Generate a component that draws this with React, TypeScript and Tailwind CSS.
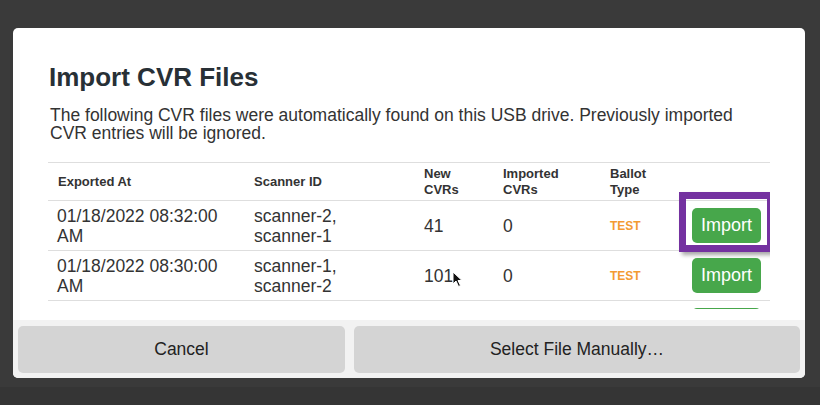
import React from "react";

const rows = [
  { at: ["01/18/2022 08:32:00", "AM"], ids: ["scanner-2,", "scanner-1"], n: "41", imp: "0", test: true, hl: true, label: "Import" },
  { at: ["01/18/2022 08:30:00", "AM"], ids: ["scanner-1,", "scanner-2"], n: "101", imp: "0", test: true, hl: false, label: "Import" },
  { at: ["", ""], ids: ["", ""], n: "", imp: "", test: false, hl: false, label: "" },
];

export default function App() {
  return (
    <div
      className="relative w-[820px] h-[405px] bg-[#3a3a3a] overflow-hidden pt-[28px] pl-[13px]"
      style={{ fontFamily: '"Liberation Sans", Arial, sans-serif' }}
    >
      <div className="w-[792px] h-[350px] bg-white rounded-[5px] overflow-hidden flex flex-col">
        <div className="h-[292px] flex flex-col pt-[34px] px-[35px]">
          <h1 className="text-[26px] leading-[30px] font-bold text-[#283036] pl-[1px]">Import CVR Files</h1>
          <p className="mt-[14px] text-[17.5px] leading-[18px] text-[#333] pl-[2px]">
            The following CVR files were automatically found on this USB drive. Previously imported CVR entries will be ignored.
          </p>
          <div className="mt-[20px] flex-1 overflow-hidden mb-[11px]">
            <table className="w-[722px] border-collapse table-fixed">
              <colgroup>
                <col className="w-[196px]" />
                <col className="w-[170px]" />
                <col className="w-[79px]" />
                <col className="w-[107px]" />
                <col className="w-[82px]" />
                <col className="w-[88px]" />
              </colgroup>
              <thead>
                <tr className="h-[38px] border-y border-[#dedede] text-[13px] leading-[16px] font-bold text-[#333] text-left">
                  <th className="pl-[10px] align-middle">Exported At</th>
                  <th className="pl-[10px] align-middle">Scanner ID</th>
                  <th className="pl-[10px] align-middle">New<br />CVRs</th>
                  <th className="pl-[10px] align-middle">Imported<br />CVRs</th>
                  <th className="pl-[10px] align-middle">Ballot<br />Type</th>
                  <th />
                </tr>
              </thead>
              <tbody>
                {rows.map((r, i) => (
                  <tr key={i} className="h-[50px] border-b border-[#dedede] text-[17.5px] leading-[20px] text-[#333]">
                    <td className="pl-[9px] align-middle">{r.at[0]}<br />{r.at[1]}</td>
                    <td className="pl-[10px] align-middle">{r.ids[0]}<br />{r.ids[1]}</td>
                    <td className="pl-[10px] align-middle">{r.n}</td>
                    <td className="pl-[10px] align-middle">{r.imp}</td>
                    <td className="pl-[10px] align-middle text-[12px] font-bold text-[#f39a32]">{r.test ? "TEST" : ""}</td>
                    <td className="pl-[10px] align-middle">
                      <div className="relative w-[69px]">
                        <div className="w-[69px] h-[35px] rounded-[5px] bg-[#47a74b] text-white text-[18px] leading-[35px] text-center">
                          {r.label}
                        </div>
                        {r.hl && (
                          <div className="absolute left-[-13px] top-[-16px] w-[95px] h-[60px] border-[7px] border-[#7431a0] shadow-[3px_3px_4px_rgba(0,0,0,0.35)]" />
                        )}
                      </div>
                    </td>
                  </tr>
                ))}
              </tbody>
            </table>
          </div>
        </div>
        <div className="flex-1 bg-[#f2f2f2] flex gap-[9px] pt-[6px] pb-[5px] px-[5px]">
          <button className="w-[327px] rounded-[5px] bg-[#d4d4d4] text-[17.5px] text-[#222]">Cancel</button>
          <button className="flex-1 rounded-[5px] bg-[#d4d4d4] text-[17.5px] text-[#222]">Select File Manually…</button>
        </div>
      </div>
      <div className="absolute left-0 right-0 top-[387px] bottom-0 bg-[#353535]" />
      <svg className="absolute left-[452px] top-[271px]" width="11" height="17" viewBox="0 0 11 17">
        <path d="M1 1 L1 13 L4 10 L6.5 15.5 L8.5 14.5 L6 9.5 L10 9.5 Z" fill="#111" stroke="#fff" strokeWidth="1" strokeLinejoin="round" />
      </svg>
    </div>
  );
}
